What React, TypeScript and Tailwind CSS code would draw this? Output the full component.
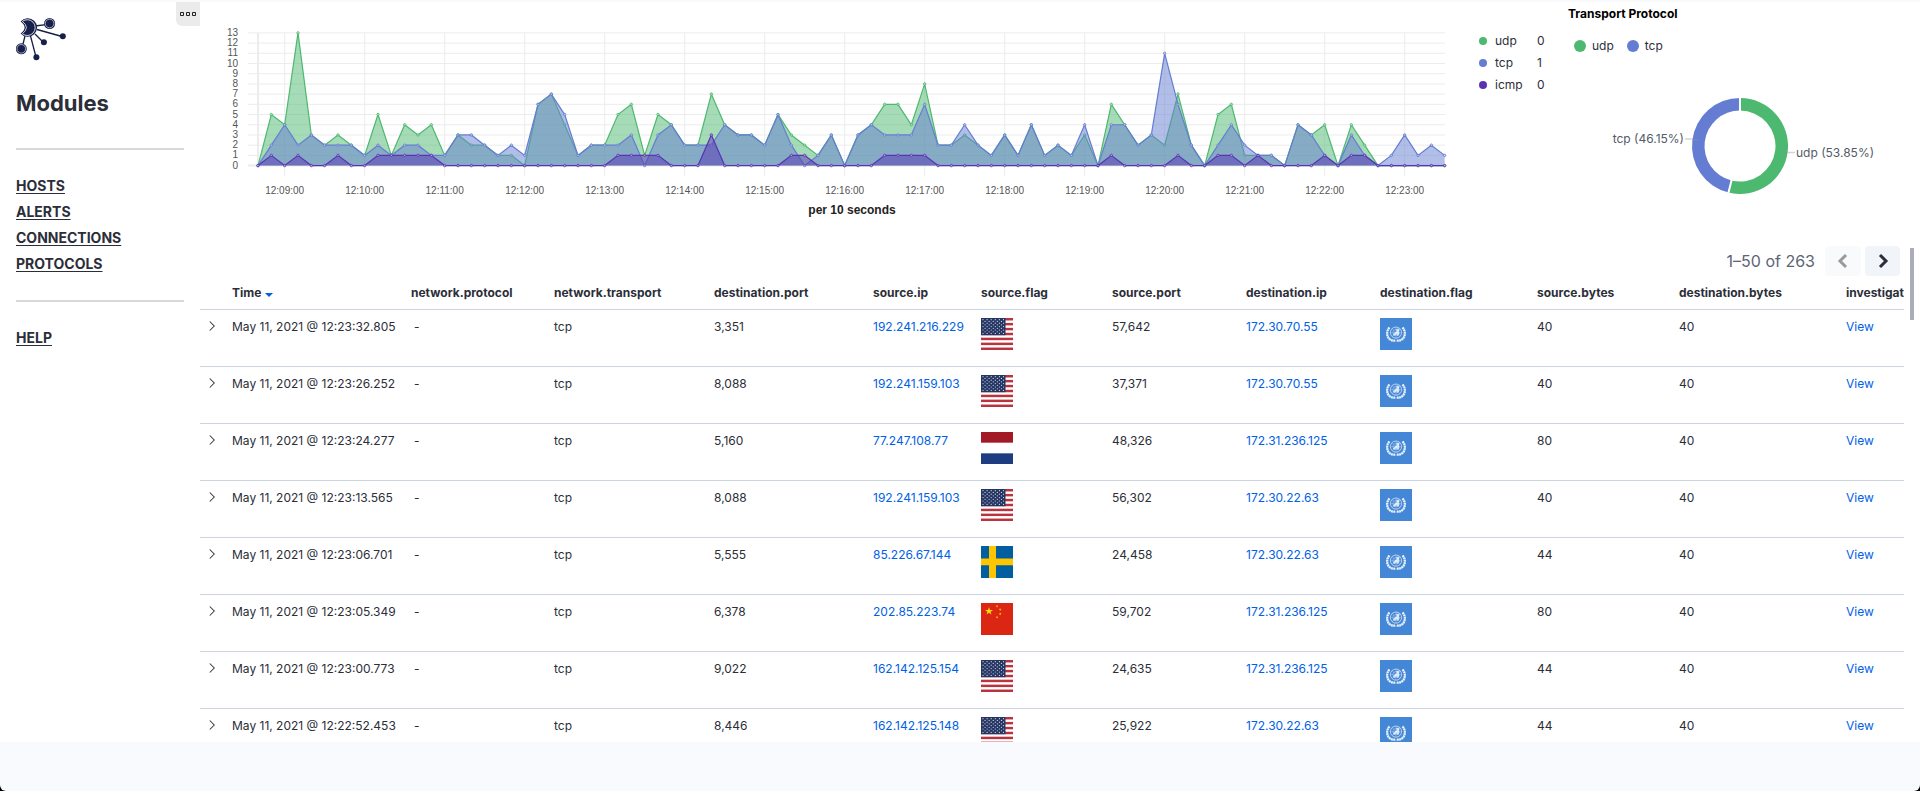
import React from "react";

const UDP = "#4db870";
const TCP = "#647dd2";
const ICMP = "#5a33b5";

const udp = [
  0, 5, 4, 13, 3, 2, 3, 2, 1, 5, 1, 4, 3, 4, 1, 3, 2, 2, 1, 1, 0, 6, 7, 4, 1, 2, 2, 5, 6, 1, 5, 4, 2, 2, 7, 4, 3, 3, 2, 5,
  3, 2, 1, 3, 0, 3, 4, 6, 6, 4, 8, 2, 2, 3, 2, 1, 3, 1, 4, 1, 2, 1, 3, 0, 6, 4, 2, 3, 2, 7, 2, 0, 5, 6, 1, 1, 1, 0, 4, 3,
  4, 0, 4, 2, 0, 0, 0, 0, 0, 0,
];
const tcp = [
  0, 2, 4, 2, 3, 2, 2, 2, 1, 2, 1, 2, 2, 1, 1, 3, 3, 2, 1, 2, 1, 6, 7, 5, 1, 2, 2, 2, 3, 0, 3, 4, 2, 2, 2, 4, 3, 3, 2, 5,
  2, 0, 1, 3, 0, 3, 4, 3, 3, 3, 6, 2, 2, 4, 2, 1, 3, 1, 4, 1, 2, 1, 4, 0, 4, 4, 2, 3, 11, 6, 2, 0, 2, 4, 2, 1, 1, 0, 4, 3,
  1, 0, 3, 1, 0, 1, 3, 1, 2, 1,
];
const icmpHits: Record<number, number> = { 34: 3 };
[1, 3, 6, 9, 10, 11, 12, 13, 27, 28, 29, 30, 40, 41, 47, 48, 49, 50, 64, 69, 72, 73, 75, 80, 82, 83].forEach((i) => {
  icmpHits[i] = 1;
});
const icmp = udp.map((_, i) => icmpHits[i] ?? 0);

const px = (i: number) => 58 + (i * 40) / 3;
const py = (v: number) => 163.6 - v * 10.21;

function Series({ data, color, fill }: { data: number[]; color: string; fill: string }) {
  const pts = data.map((v, i) => `${px(i).toFixed(2)},${py(v).toFixed(2)}`).join(" ");
  return (
    <g>
      <polygon points={`${px(0)},${py(0)} ${pts} ${px(89)},${py(0)}`} fill={fill} fillOpacity={0.5} />
      <polyline points={pts} fill="none" stroke={color} strokeWidth={1.2} />
      {data.map((v, i) => (
        <circle key={i} cx={px(i)} cy={py(v)} r={1.2} fill="#fff" fillOpacity={0.5} stroke={color} strokeWidth={0.9} />
      ))}
    </g>
  );
}

function AreaChart() {
  const minutes = Array.from({ length: 15 }, (_, k) => k);
  return (
    <svg viewBox="0 0 1260 194" className="block w-full" role="img" aria-label="Events per 10 seconds">
      <g stroke="#ececec" strokeWidth={1}>
        {Array.from({ length: 14 }, (_, v) => (
          <line key={v} x1={48} x2={1245} y1={py(v)} y2={py(v)} />
        ))}
        {minutes.map((k) => (
          <line key={k} x1={px(2 + k * 6)} x2={px(2 + k * 6)} y1={31} y2={174} />
        ))}
        <line x1={58} x2={58} y1={31} y2={164} strokeWidth={2} />
        <line x1={48} x2={1245} y1={py(0)} y2={py(0)} strokeWidth={2} />
      </g>
      <Series data={udp} color={UDP} fill={UDP} />
      <Series data={tcp} color={TCP} fill={TCP} />
      <Series data={icmp} color={ICMP} fill={ICMP} />
      <g fontFamily="'Liberation Sans', Arial, sans-serif" fontSize={10} fill="#555">
        {Array.from({ length: 14 }, (_, v) => (
          <text key={v} x={38} y={py(v) + 3} textAnchor="end">
            {v}
          </text>
        ))}
        {minutes.map((k) => (
          <text key={k} x={px(2 + k * 6)} y={192} textAnchor="middle">
            {`12:${String(9 + k).padStart(2, "0")}:00`}
          </text>
        ))}
      </g>
    </svg>
  );
}

function Donut() {
  const a = 0.5385 * 2 * Math.PI;
  const at = (r: number) => `${(Math.sin(a) * r).toFixed(2)} ${(-Math.cos(a) * r).toFixed(2)}`;
  const label = { fontFamily: "Inter, sans-serif", fontSize: 12, fill: "#535b69" };
  return (
    <svg viewBox="-172 -78 344 156" className="block h-[156px] w-full" role="img" aria-label="Transport protocol share">
      <path d={`M0 -48A48 48 0 1 1 ${at(48)}L${at(35.5)}A35.5 35.5 0 1 0 0 -35.5Z`} fill={UDP} />
      <path d={`M${at(48)}A48 48 0 0 1 0 -48L0 -35.5A35.5 35.5 0 0 0 ${at(35.5)}Z`} fill={TCP} />
      <path d={`M0 -49V-34M${at(34)}L${at(49)}`} stroke="#fff" strokeWidth={2} />
      <path d="M41 5L48 6.500H55M-41 -5.500L-48 -7H-55" stroke="#8b93a1" strokeOpacity={0.4} strokeWidth={1.5} fill="none" />
      <text x={56} y={11} {...label}>udp (53.85%)</text>
      <text x={-56} y={-3} textAnchor="end" {...label}>tcp (46.15%)</text>
    </svg>
  );
}

function Logo() {
  return (
    <svg viewBox="0 0 52 46" className="block h-[46px] w-[52px]" fill="#16204a" role="img" aria-label="Logo">
      <path d="M19 9L30 7.600M21 12.500L46 19.500M19 17L27 25M14.500 19L20 40M9 19L6.500 29" stroke="#16204a" strokeWidth={1.3} />
      <path d="M4.600 4.600A9.300 9.300 0 1 1 4.600 16.400Q12.600 10.500 4.600 4.600Z" />
      <path d="M6.400 4.400A7.900 7.900 0 1 1 6.400 16.800Q14.400 10.500 6.400 4.400Z" fill="#16204a" stroke="#fff" strokeWidth={0.8} />
      <circle cx={33.600} cy={6.500} r={5.500} />
      <circle cx={5.300} cy={31.800} r={5.500} />
      <circle cx={46.800} cy={19.200} r={3} />
      <circle cx={27.900} cy={25.200} r={3} />
      <circle cx={20.400} cy={40.200} r={3} />
      <g fill="none" stroke="#fff" strokeWidth={0.6}>
        <circle cx={33.600} cy={6.500} r={4.300} />
        <circle cx={5.300} cy={31.800} r={4.300} />
      </g>
    </svg>
  );
}

function Flag({ code }: { code: string }) {
  const shared = "block h-8 w-8";
  if (code === "us")
    return (
      <svg viewBox="0 0 32 32" className={shared} role="img" aria-label="United States">
        <rect width={32} height={32} fill="#fff" />
        {Array.from({ length: 7 }, (_, i) => (
          <rect key={i} y={(i * 64) / 13} width={32} height={32 / 13} fill="#b9343f" />
        ))}
        <rect width={24.500} height={17.200} fill="#263664" />
        {Array.from({ length: 9 }, (_, r) =>
          Array.from({ length: r % 2 ? 5 : 6 }, (_, c) => (
            <circle key={`${r}-${c}`} cx={2 + c * 4.1 + (r % 2) * 2.05} cy={1.700 + r * 1.720} r={0.6} fill="#d5d9e5" />
          )),
        )}
      </svg>
    );
  if (code === "nl")
    return (
      <svg viewBox="0 0 32 32" className={shared} role="img" aria-label="Netherlands">
        <rect width={32} height={32} fill="#fff" />
        <rect width={32} height={10.670} fill="#a11a26" />
        <rect y={21.330} width={32} height={10.670} fill="#1e3d80" />
      </svg>
    );
  if (code === "se")
    return (
      <svg viewBox="0 0 32 32" className={shared} role="img" aria-label="Sweden">
        <rect width={32} height={32} fill="#025f9f" />
        <path d="M8 0H15V32H8ZM0 12.600H32V19.200H0Z" fill="#fdc600" />
      </svg>
    );
  if (code === "cn") {
    const star = "M0-1L.2245-.309H.951L.363.118L.588.809L0 .382L-.588.809L-.363.118L-.951-.309H-.2245Z";
    return (
      <svg viewBox="0 0 32 32" className={shared} role="img" aria-label="China">
        <rect width={32} height={32} fill="#dc2614" />
        <g fill="#ffdf00">
          <path d={star} transform="translate(8 8.200) scale(4.200)" />
          <path d={star} transform="translate(16 3.200) rotate(25) scale(1.400)" />
          <path d={star} transform="translate(19.200 6.500) rotate(45) scale(1.400)" />
          <path d={star} transform="translate(19.200 11) scale(1.400)" />
          <path d={star} transform="translate(16 14.200) rotate(20) scale(1.400)" />
        </g>
      </svg>
    );
  }
  return (
    <svg viewBox="0 0 32 32" className={shared} role="img" aria-label="United Nations">
      <rect width={32} height={32} fill="#4387d6" />
      <g fill="none" stroke="#fff">
        <path
          d="M9.500 9.500C6.400 12.500 6.400 18 9.300 20.800C11.300 22.800 13.600 23 15.700 22.300M22.500 9.500C25.600 12.500 25.600 18 22.700 20.800C20.700 22.800 18.400 23 16.300 22.300"
          strokeWidth={2.2}
          strokeDasharray="2 .4"
          strokeOpacity={0.9}
        />
        <circle cx={16} cy={14.600} r={5.600} strokeWidth={0.9} strokeOpacity={0.65} />
        <circle cx={16} cy={14.600} r={3.200} strokeWidth={0.5} strokeOpacity={0.5} />
        <path d="M16 9V20.200M10.400 14.600H21.600M12 10.600L20 18.600M20 10.600L12 18.600" strokeWidth={0.5} strokeOpacity={0.5} />
      </g>
      <path
        d="M16.400 11L18.400 10.400L19.600 11.600L19 13.600L19.400 15.600L18.400 17.600L17 17.800L16.600 16.200L14.800 17.800L13 17.200L13.400 15.800L15 14.600L16.400 13.800Z"
        fill="#fff"
        fillOpacity={0.75}
      />
    </svg>
  );
}

type Row = [time: string, dport: string, sip: string, flag: string, sport: string, dip: string, sbytes: string];
const rows: Row[] = [
  ["12:23:32.805", "3,351", "192.241.216.229", "us", "57,642", "172.30.70.55", "40"],
  ["12:23:26.252", "8,088", "192.241.159.103", "us", "37,371", "172.30.70.55", "40"],
  ["12:23:24.277", "5,160", "77.247.108.77", "nl", "48,326", "172.31.236.125", "80"],
  ["12:23:13.565", "8,088", "192.241.159.103", "us", "56,302", "172.30.22.63", "40"],
  ["12:23:06.701", "5,555", "85.226.67.144", "se", "24,458", "172.30.22.63", "44"],
  ["12:23:05.349", "6,378", "202.85.223.74", "cn", "59,702", "172.31.236.125", "80"],
  ["12:23:00.773", "9,022", "162.142.125.154", "us", "24,635", "172.31.236.125", "44"],
  ["12:22:52.453", "8,446", "162.142.125.148", "us", "25,922", "172.30.22.63", "44"],
];

const headers = [
  "network.protocol",
  "network.transport",
  "destination.port",
  "source.ip",
  "source.flag",
  "source.port",
  "destination.ip",
  "destination.flag",
  "source.bytes",
  "destination.bytes",
  "investigate",
];

function Chevron({ dir, className }: { dir: "left" | "right"; className: string }) {
  return (
    <svg viewBox="0 0 16 16" className={className} fill="none" stroke="currentColor" aria-hidden="true">
      <path d={dir === "left" ? "M11 2L5 8L11 14" : "M5 2L11 8L5 14"} />
    </svg>
  );
}

const textCell = "px-1 pt-[9px]";
const flagCell = "px-1 pt-2";

function EventsTable() {
  return (
    <table className="w-full min-w-[1720px] table-fixed border-collapse text-left text-xs leading-4">
      <colgroup>
        <col className="w-7" />
        <col className="w-[179px]" />
        <col className="w-[143px]" />
        <col className="w-40" />
        <col className="w-[159px]" />
        <col className="w-[108px]" />
        <col className="w-[131px]" />
        <col className="w-[134px]" />
        <col className="w-[134px]" />
        <col className="w-[157px]" />
        <col className="w-[142px]" />
        <col className="w-[167px]" />
        <col />
      </colgroup>
      <thead>
        <tr className="h-[33px] border-b border-[#cbd4e0] align-middle">
          <th aria-label="Expand" />
          <th className="px-1 pt-0.5 font-bold" aria-sort="descending">
            <button type="button" className="flex items-center gap-1 font-bold">
              Time
              <svg viewBox="0 0 8 4" className="mt-1 h-1 w-2" fill="#0061e6" aria-hidden="true">
                <path d="M0 0H8L4 4Z" />
              </svg>
            </button>
          </th>
          {headers.map((h) => (
            <th key={h} className="px-1 pt-0.5 font-bold whitespace-nowrap">
              {h}
            </th>
          ))}
        </tr>
      </thead>
      <tbody>
        {rows.map(([time, dport, sip, flag, sport, dip, sbytes]) => (
          <tr key={time} className="h-[57px] border-b border-[#cbd4e0] align-top">
            <td className="px-1 pt-2">
              <button type="button" aria-label="Toggle row details" className="flex h-4 w-4 items-center justify-center text-[#343741]">
                <Chevron dir="right" className="h-3 w-3 stroke-[1.4]" />
              </button>
            </td>
            <td className={`${textCell} whitespace-nowrap`}>May 11, 2021 @ {time}</td>
            <td className="px-[7px] pt-[9px]">-</td>
            <td className={textCell}>tcp</td>
            <td className={textCell}>{dport}</td>
            <td className={textCell}>
              <a href="#source" className="text-[#0061e6]">{sip}</a>
            </td>
            <td className={flagCell}><Flag code={flag} /></td>
            <td className={textCell}>{sport}</td>
            <td className={textCell}>
              <a href="#destination" className="text-[#0061e6]">{dip}</a>
            </td>
            <td className={flagCell}><Flag code="un" /></td>
            <td className={textCell}>{sbytes}</td>
            <td className={textCell}>40</td>
            <td className={textCell}>
              <a href="#view" className="text-[#0061e6]">View</a>
            </td>
          </tr>
        ))}
      </tbody>
    </table>
  );
}

function Sidebar() {
  const link = "text-sm leading-[26px] font-bold underline underline-offset-2";
  return (
    <aside className="flex w-[200px] shrink-0 flex-col">
      <div className="flex items-start justify-between pl-4">
        <div className="pt-[15px]"><Logo /></div>
        <button type="button" aria-label="Panel options" className="flex h-6 w-6 items-center justify-center rounded-bl-md bg-[#ebebeb]">
          <svg viewBox="0 0 16 4" className="h-1 w-4" fill="none" stroke="#222" aria-hidden="true">
            <path d="M.5.500H3.500V3.500H.5ZM6.500.500H9.500V3.500H6.500ZM12.500.500H15.500V3.500H12.500Z" />
          </svg>
        </button>
      </div>
      <nav className="flex flex-col px-4">
        <h1 className="mt-5 text-[22px] leading-10 font-bold">Modules</h1>
        <hr className="mt-[25px] border-0 border-t-2 border-[#d9d9d9]" />
        <ul className="mt-[23px]">
          {["HOSTS", "ALERTS", "CONNECTIONS", "PROTOCOLS"].map((t) => (
            <li key={t} className="flex"><a href={`#${t.toLowerCase()}`} className={link}>{t}</a></li>
          ))}
        </ul>
        <hr className="mt-[23px] border-0 border-t-2 border-[#d9d9d9]" />
        <div className="mt-[23px] flex"><a href="#help" className={link}>HELP</a></div>
      </nav>
    </aside>
  );
}

const legend = [
  { name: "udp", value: 0, dot: "bg-[#4db870]" },
  { name: "tcp", value: 1, dot: "bg-[#647dd2]" },
  { name: "icmp", value: 0, dot: "bg-[#5a33b5]" },
];

export default function App() {
  return (
    <div className="bg-black">
      <div className="flex h-screen flex-col overflow-hidden rounded-b-md bg-[#f9fafe] pt-0.5 pb-[49px] font-[Inter,sans-serif] text-[#2b2e38]">
        <div className="flex min-h-0 flex-1 bg-white">
          <Sidebar />
          <main className="flex min-w-0 flex-1 flex-col">
            <div className="flex h-[242px] shrink-0">
              <section className="min-w-0 flex-1">
                <AreaChart />
                <p className="pl-11 text-center font-['Liberation_Sans',Arial,sans-serif] text-xs leading-7 font-bold text-[#222]">
                  per 10 seconds
                </p>
              </section>
              <ul className="w-[108px] shrink-0 pt-7 pl-[19px] text-xs leading-[22px]">
                {legend.map((l) => (
                  <li key={l.name} className="flex items-center">
                    <span className={`mr-2 h-2 w-2 rounded-full ${l.dot}`} />
                    <span className="w-[42px]">{l.name}</span>
                    <span>{l.value}</span>
                  </li>
                ))}
              </ul>
              <section className="w-[344px] shrink-0">
                <h2 className="pt-1 text-xs leading-4 font-bold text-black">Transport Protocol</h2>
                <div className="flex gap-[13px] pt-4 pl-1.5 text-xs leading-4">
                  {legend.slice(0, 2).map((l) => (
                    <span key={l.name} className="flex items-center gap-1.5">
                      <span className={`h-3 w-3 rounded-full ${l.dot}`} />
                      {l.name}
                    </span>
                  ))}
                </div>
                <div className="pt-[14px]"><Donut /></div>
              </section>
              <div className="w-2 shrink-0" />
            </div>
            <div className="flex min-h-0 flex-1">
              <section className="flex min-w-0 flex-1 flex-col overflow-hidden">
                <div className="flex items-center justify-end gap-1 pt-0.5 pr-1 text-base leading-[30px] text-[#5d6575]">
                  <span className="mr-1.5">1–50 of 263</span>
                  <button type="button" disabled aria-label="Previous page" className="flex h-[30px] w-9 items-center justify-center rounded bg-[#f8fafc] text-[#9a9a9a]">
                    <Chevron dir="left" className="h-4 w-4 stroke-[3]" />
                  </button>
                  <button type="button" aria-label="Next page" className="flex h-[30px] w-[35px] items-center justify-center rounded bg-[#f1f5f9] text-[#2b2e38]">
                    <Chevron dir="right" className="h-4 w-4 stroke-[3]" />
                  </button>
                </div>
                <EventsTable />
              </section>
              <div className="w-4 shrink-0 pt-1 pl-1.5">
                <div className="h-[72px] w-1 bg-[#abaeb8]" />
              </div>
            </div>
          </main>
        </div>
      </div>
    </div>
  );
}
